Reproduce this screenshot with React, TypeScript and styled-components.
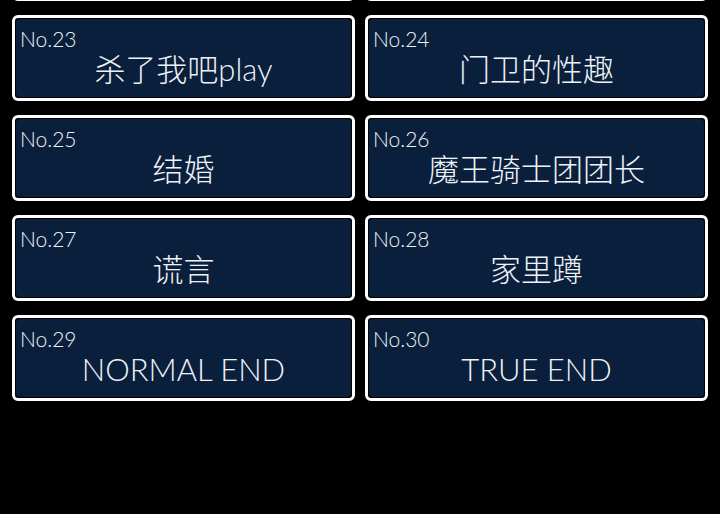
import React from "react";
import styled, { createGlobalStyle } from "styled-components";

const Global = createGlobalStyle`
  html, body {
    margin: 0;
    padding: 0;
    background: #000;
    overflow: hidden;
  }
  body {
    font-family: Lato, "Noto Sans CJK SC", sans-serif;
  }
`;

const Screen = styled.div`
  width: 720px;
  height: 514px;
  background: #000;
  overflow: hidden;
`;

const List = styled.div`
  display: grid;
  grid-template-columns: 1fr 1fr;
  column-gap: 10px;
  row-gap: 14px;
  padding: 0 12px;
  margin-top: -85px;
`;

const Card = styled.div`
  height: 86px;
  box-sizing: border-box;
  border: 3px solid #ffffff;
  border-radius: 6px;
  background: #000;
  padding: 1px;
  display: flex;
`;

const Inner = styled.div`
  flex: 1;
  background: #0a1f3c;
  border-radius: 4px;
  display: flex;
  flex-direction: column;
  padding: 9px 4px 0 4px;
  color: #eef2f6;
`;

const Label = styled.div`
  font-family: Lato, "Noto Sans CJK SC", sans-serif;
  font-weight: 300;
  font-size: 21px;
  line-height: 21px;
  height: 21px;
`;

const Title = styled.div`
  font-family: Lato, "Noto Sans CJK SC", sans-serif;
  font-weight: 300;
  font-size: 31px;
  line-height: 31px;
  margin-top: 5px;
  text-align: center;
  white-space: nowrap;
`;

const items: { no: number; title: string; hidden?: boolean }[] = [
  { no: 21, title: "", hidden: true },
  { no: 22, title: "", hidden: true },
  { no: 23, title: "杀了我吧play" },
  { no: 24, title: "门卫的性趣" },
  { no: 25, title: "结婚" },
  { no: 26, title: "魔王骑士团团长" },
  { no: 27, title: "谎言" },
  { no: 28, title: "家里蹲" },
  { no: 29, title: "NORMAL END" },
  { no: 30, title: "TRUE END" },
];

export default function App() {
  return (
    <Screen>
      <Global />
      <List>
        {items.map((it) => (
          <Card key={it.no}>
            <Inner>
              {!it.hidden && (
                <>
                  <Label>No.{it.no}</Label>
                  <Title>{it.title}</Title>
                </>
              )}
            </Inner>
          </Card>
        ))}
      </List>
    </Screen>
  );
}
